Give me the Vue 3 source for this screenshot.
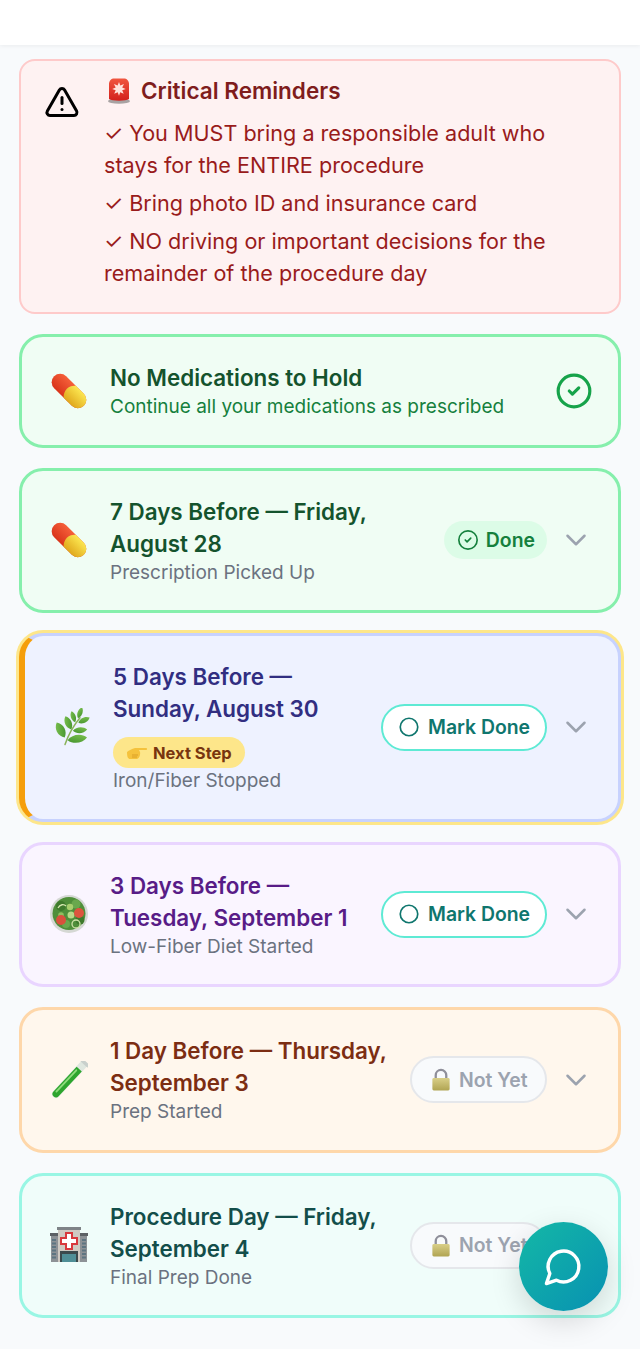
<script setup>
const cards = [
  { id: 'd7', tone: 'green', icon: 'pill', title: '7 Days Before — Friday, August 28', sub: 'Prescription Picked Up', state: 'done' },
  { id: 'd5', tone: 'indigo', icon: 'herb', title: '5 Days Before — Sunday, August 30', sub: 'Iron/Fiber Stopped', state: 'mark', next: true },
  { id: 'd3', tone: 'purple', icon: 'salad', title: '3 Days Before — Tuesday, September 1', sub: 'Low-Fiber Diet Started', state: 'mark' },
  { id: 'd1', tone: 'orange', icon: 'tube', title: '1 Day Before — Thursday, September 3', sub: 'Prep Started', state: 'locked' },
  { id: 'd0', tone: 'teal', icon: 'hospital', title: 'Procedure Day — Friday, September 4', sub: 'Final Prep Done', state: 'locked' }
]
const herbLeaves = [
  { t: 'translate(7.700 22) rotate(-28) scale(.85 .85)' },
  { t: 'translate(15.300 14.800) rotate(-24) scale(.68 .72)' },
  { t: 'translate(20.300 8.800) rotate(-18) scale(.5 .58)' },
  { t: 'translate(27 4.800) rotate(20) scale(.5 .58)' },
  { t: 'translate(31 12.200) rotate(65) scale(.55 .62)' },
  { t: 'translate(27 22.200) rotate(85) scale(.62 .72)' },
  { t: 'translate(24.300 30.800) rotate(82) scale(.8 .98)' }
]
</script>

<template>
  <div class="page">
    <header class="topbar"></header>
    <main class="list">
      <section class="alert">
        <svg class="warn" viewBox="0 0 24 24" fill="none" stroke="#000" stroke-width="2" stroke-linecap="round" stroke-linejoin="round">
          <path d="m21.730 18-8-14a2 2 0 0 0-3.480 0l-8 14A2 2 0 0 0 4 21h16a2 2 0 0 0 1.730-3" />
          <path d="M12 9v4" />
          <path d="M12 17h.01" />
        </svg>
        <div class="alert-body">
          <h2 class="alert-title">
            <svg class="siren" viewBox="0 0 24 26">
              <defs>
                <linearGradient id="sirenG" x1="0" y1="0" x2="0" y2="1">
                  <stop offset="0" stop-color="#f0563f" />
                  <stop offset="1" stop-color="#d3201c" />
                </linearGradient>
              </defs>
              <ellipse cx="12" cy="23.200" rx="11" ry="2.600" fill="#a8a3a3" />
              <path d="M2 21V6c0-3.500 2.500-5.500 5-5.500h10c2.500 0 5 2 5 5.500v15c-3 2.200-17 2.200-20 0z" fill="url(#sirenG)" />
              <path d="M12 4l1.300 3.500 3.700-1.500-1.800 3.500 3.500 1.500-3.500 1.300 1.500 3.500-3.500-1.500-1.200 3.500-1.300-3.500-3.500 1.500 1.500-3.500-3.500-1.300 3.500-1.500-1.800-3.500 3.700 1.500z" fill="#ffe3dc" />
            </svg>
            <span>Critical Reminders</span>
          </h2>
          <p class="alert-item">✓ You MUST bring a responsible adult who stays for the ENTIRE procedure</p>
          <p class="alert-item">✓ Bring photo ID and insurance card</p>
          <p class="alert-item">✓ NO driving or important decisions for the remainder of the procedure day</p>
        </div>
      </section>

      <section class="card green">
        <svg class="emoji" viewBox="0 0 38 38">
          <defs>
            <linearGradient id="pillR0" x1="0" y1="0" x2="0" y2="1"><stop offset="0" stop-color="#f5603a" /><stop offset="1" stop-color="#d9341a" /></linearGradient>
            <linearGradient id="pillY0" x1="0" y1="0" x2="0" y2="1"><stop offset="0" stop-color="#fbe650" /><stop offset="1" stop-color="#e0a81c" /></linearGradient>
          </defs>
          <g transform="rotate(45 19 19)">
            <rect x="-2" y="10.500" width="42" height="17" rx="8.500" fill="url(#pillR0)" />
            <path d="M20 10.500h11.500a8.500 8.500 0 0 1 0 17H20a11 11 0 0 1 0-17z" fill="url(#pillY0)" />
          </g>
        </svg>
        <div class="text">
          <h3 class="title">No Medications to Hold</h3>
          <p class="sub strong">Continue all your medications as prescribed</p>
        </div>
        <svg class="status-check" viewBox="0 0 24 24" fill="none" stroke="#16a34a" stroke-width="2" stroke-linecap="round" stroke-linejoin="round">
          <circle cx="12" cy="12" r="10" />
          <path d="m9 12 2 2 4-4" />
        </svg>
      </section>

      <section v-for="c in cards" :key="c.id" class="card" :class="c.tone">
        <svg v-if="c.icon === 'pill'" class="emoji" viewBox="0 0 38 38">
          <defs>
            <linearGradient id="pillR" x1="0" y1="0" x2="0" y2="1"><stop offset="0" stop-color="#f5603a" /><stop offset="1" stop-color="#d9341a" /></linearGradient>
            <linearGradient id="pillY" x1="0" y1="0" x2="0" y2="1"><stop offset="0" stop-color="#fbe650" /><stop offset="1" stop-color="#e0a81c" /></linearGradient>
          </defs>
          <g transform="rotate(45 19 19)">
            <rect x="-2" y="10.500" width="42" height="17" rx="8.500" fill="url(#pillR)" />
            <path d="M20 10.500h11.500a8.500 8.500 0 0 1 0 17H20a11 11 0 0 1 0-17z" fill="url(#pillY)" />
          </g>
        </svg>
        <svg v-else-if="c.icon === 'herb'" class="emoji" viewBox="0 0 38 38">
          <defs>
            <linearGradient id="leafG" x1="0" y1="0" x2="1" y2="1"><stop offset="0" stop-color="#82c654" /><stop offset="1" stop-color="#3f8f2a" /></linearGradient>
          </defs>
          <path d="M12 36.500C15 28 21 17 27 9.800" stroke="#8ab35a" stroke-width="1.500" fill="none" stroke-linecap="round" />
          <path
            v-for="(l, i) in herbLeaves"
            :key="i"
            d="M0-10C6.500-5 6.500 5 0 10C-6.500 5-6.500-5 0-10Z"
            :transform="l.t"
            fill="url(#leafG)"
          />
        </svg>
        <svg v-else-if="c.icon === 'salad'" class="emoji" viewBox="0 0 38 38">
          <circle cx="19" cy="19" r="19" fill="#d5d8d4" />
          <circle cx="19" cy="18.500" r="16.500" fill="#4f8f3a" />
          <circle cx="11" cy="11" r="5" fill="#3e7a2c" />
          <circle cx="26" cy="9" r="4.500" fill="#69a84d" />
          <circle cx="30" cy="25" r="4.500" fill="#3e7a2c" />
          <circle cx="16" cy="29" r="4" fill="#69a84d" />
          <circle cx="20" cy="12" r="3.200" fill="#a7cf6d" />
          <circle cx="21" cy="20" r="3.500" fill="#b8d987" />
          <circle cx="11" cy="20" r="2.800" fill="#8fbf5f" />
          <circle cx="11" cy="25" r="5" fill="#d9513c" />
          <circle cx="29" cy="18" r="5" fill="#dd553e" />
          <circle cx="26" cy="29" r="4" fill="none" stroke="#cfe2a8" stroke-width="1.300" />
          <path d="M8 13c2-4 6-4 8-2" fill="none" stroke="#d6e8b0" stroke-width="1.300" />
        </svg>
        <svg v-else-if="c.icon === 'tube'" class="emoji" viewBox="0 0 38 38">
          <g transform="rotate(43 19 19)">
            <rect x="15" y="-5" width="8" height="47" rx="4" fill="#dfe7df" />
            <path d="M15.500 4h7v34a3.500 3.500 0 0 1-7 0z" fill="#2ea52e" />
            <rect x="16.800" y="6" width="1.800" height="31" rx=".9" fill="#8fdc7c" />
            <rect x="13.500" y="-6" width="11" height="3.500" rx="1.500" fill="#c9d0cc" />
          </g>
        </svg>
        <svg v-else class="emoji" viewBox="0 0 38 38">
          <rect x="1" y="9" width="8" height="27" fill="#8d9296" />
          <rect x="29" y="9" width="8" height="27" fill="#8d9296" />
          <rect x="0" y="7" width="10" height="3" fill="#5d6266" />
          <rect x="28" y="7" width="10" height="3" fill="#5d6266" />
          <rect x="8" y="3" width="22" height="33" fill="#cfcac2" />
          <rect x="7" y="1" width="24" height="3" fill="#7e8387" />
          <path d="M16 7h6v5h5v6h-5v5h-6v-5h-5v-6h5z" fill="#fff" stroke="#d8393d" stroke-width="2" />
          <rect x="10" y="25" width="18" height="11" fill="#3b4a4c" />
          <rect x="12" y="28" width="14" height="8" fill="#4f8f96" />
          <path d="M3 13v20M5 13v20M33 13v20M35 13v20" stroke="#4a6a7a" stroke-width="1.400" stroke-dasharray="2 1.500" />
        </svg>

        <div class="text">
          <h3 class="title">{{ c.title }}</h3>
          <div v-if="c.next" class="next">
            <svg class="hand" viewBox="0 0 22 15">
              <path d="M1 7c2-2 5-3 8-4l11 0c1.500 0 1.500 2 0 2h-7l1 2c.5 1.500 0 6-3 7H4C2 14 1 12 1 7z" fill="#f5c23c" />
              <path d="M6 10h6M6 12h5" stroke="#d99d24" stroke-width=".9" />
            </svg>
            <span>Next Step</span>
          </div>
          <p class="sub">{{ c.sub }}</p>
        </div>

        <div v-if="c.state === 'done'" class="pill done">
          <svg class="pill-ico" viewBox="0 0 24 24" fill="none" stroke="#15803d" stroke-width="1.800" stroke-linecap="round" stroke-linejoin="round">
            <circle cx="12" cy="12" r="10" />
            <path d="m9 12 2 2 4-4" />
          </svg>
          <span>Done</span>
        </div>
        <button v-else-if="c.state === 'mark'" class="pill mark">
          <svg class="pill-ico" viewBox="0 0 24 24" fill="none" stroke="#0f766e" stroke-width="2">
            <circle cx="12" cy="12" r="10.500" />
          </svg>
          <span>Mark Done</span>
        </button>
        <div v-else class="pill locked">
          <svg class="lock" viewBox="0 0 20 24">
            <defs>
              <linearGradient id="lockG" x1="0" y1="0" x2="0" y2="1"><stop offset="0" stop-color="#d9cf88" /><stop offset="1" stop-color="#b0a452" /></linearGradient>
            </defs>
            <path d="M4.500 12V7.500a5.500 5.500 0 0 1 11 0V12" fill="none" stroke="#8f8f9a" stroke-width="2.400" />
            <rect x="1" y="10.500" width="18" height="13" rx="1.500" fill="url(#lockG)" />
          </svg>
          <span>Not Yet</span>
        </div>

        <svg class="chev" viewBox="0 0 24 24" fill="none" stroke="#9ca3af" stroke-width="1.800" stroke-linecap="round" stroke-linejoin="round">
          <path d="m6 9 6 6 6-6" />
        </svg>
      </section>
    </main>

    <button class="fab" aria-label="Chat">
      <svg viewBox="0 0 24 24" fill="none" stroke="#fff" stroke-width="2" stroke-linecap="round" stroke-linejoin="round">
        <path d="M7.900 20A9 9 0 1 0 4 16.100L2 22Z" />
      </svg>
    </button>
  </div>
</template>

<style>
html, body { margin: 0; background: #f8fafc; }
</style>

<style scoped>
.page {
  min-height: 1349px;
  background: #f8fafc;
  font-family: Inter, "Liberation Sans", sans-serif;
  overflow: hidden;
}
.topbar {
  height: 45px;
  background: #fff;
  box-shadow: 0 1px 4px rgba(0, 0, 0, .06);
}
.list {
  display: flex;
  flex-direction: column;
  gap: 20px;
  padding: 14px 19px 0;
}
.alert {
  display: flex;
  padding: 14px 24px 23px 23px;
  background: #fef2f2;
  border: 2px solid #fecaca;
  border-radius: 16px;
}
.warn { width: 36px; height: 36px; flex: none; margin-top: 9px; }
.alert-body { flex: 1; min-width: 0; margin-left: 24px; }
.alert-title {
  display: flex;
  align-items: center;
  gap: 10px;
  margin: 0 0 10px;
  font-size: 22.500px;
  line-height: 32px;
  font-weight: 600;
  color: #7f1d1d;
}
.siren { width: 24px; height: 26px; flex: none; margin-left: 3px; }
.alert-item {
  margin: 0 0 6px;
  font-size: 21.600px;
  line-height: 32px;
  color: #991b1b;
}
.alert-item:last-child { margin-bottom: 0; }

.card {
  display: flex;
  align-items: center;
  padding: 25.300px 30px 25px 28px;
  border: 3px solid;
  border-radius: 24px;
}
.green { background: #f0fdf4; border-color: #86efac; --ink: #14532d; }
.indigo {
  background: #eef2ff;
  border-color: #c7d2fe;
  border-left: 6px solid #f59e0b;
  box-shadow: 0 0 0 3px #fde68a;
  --ink: #312e81;
}
.purple { background: #faf5ff; border-color: #e9d5ff; --ink: #581c87; }
.orange { background: #fff7ed; border-color: #fed7aa; --ink: #7c2d12; }
.teal { background: #f0fdfa; border-color: #99f6e4; --ink: #134e4a; }

.emoji { width: 38px; height: 38px; flex: none; margin-right: 22px; }
.text { flex: 1; min-width: 0; margin-right: 17px; }
.title {
  margin: 0;
  font-size: 22.400px;
  line-height: 32px;
  font-weight: 600;
  color: var(--ink);
}
.sub {
  margin: 0;
  font-size: 19px;
  line-height: 25.200px;
  color: #6b7280;
}
.sub.strong { color: #15803d; }
.next {
  display: flex;
  align-items: center;
  gap: 5px;
  margin-top: 12px;
  width: max-content;
  height: 31px;
  padding: 0 13px;
  background: #fde68a;
  border-radius: 16px;
  font-size: 16.500px;
  font-weight: 700;
  color: #78350f;
  box-sizing: border-box;
}
.hand { width: 22px; height: 15px; }

.pill {
  display: flex;
  align-items: center;
  gap: 9px;
  flex: none;
  box-sizing: border-box;
  border-radius: 24px;
  font-family: inherit;
  font-size: 19.400px;
  font-weight: 600;
}
.pill-ico { width: 20px; height: 20px; flex: none; }
.done { gap: 7px; height: 38px; padding: 0 12px 0 13px; background: #dcfce7; color: #15803d; }
.done .pill-ico { width: 22px; height: 22px; }
.mark { width: 166px; height: 47px; padding: 0 14px 0 16px; background: #fff; border: 2px solid #5eead4; color: #0f766e; }
.locked { gap: 8px; width: 137px; height: 47px; padding: 0 15px 0 19px; background: #f8fafc; border: 2px solid #e5e7eb; color: #9ca3af; }
.lock { width: 20px; height: 23px; flex: none; }

.chev { width: 34px; height: 34px; flex: none; margin-left: 12px; margin-right: -5px; }
.status-check { width: 38px; height: 38px; flex: none; margin-right: -4.500px; }

.fab {
  position: fixed;
  left: 519px;
  top: 1222px;
  width: 89px;
  height: 89px;
  display: flex;
  align-items: center;
  justify-content: center;
  padding: 0;
  border: 0;
  border-radius: 50%;
  background: linear-gradient(135deg, #14b8a6, #0891b2);
  box-shadow: 0 10px 30px rgba(0, 0, 0, .15);
}
.fab svg { width: 41px; height: 41px; }
</style>
